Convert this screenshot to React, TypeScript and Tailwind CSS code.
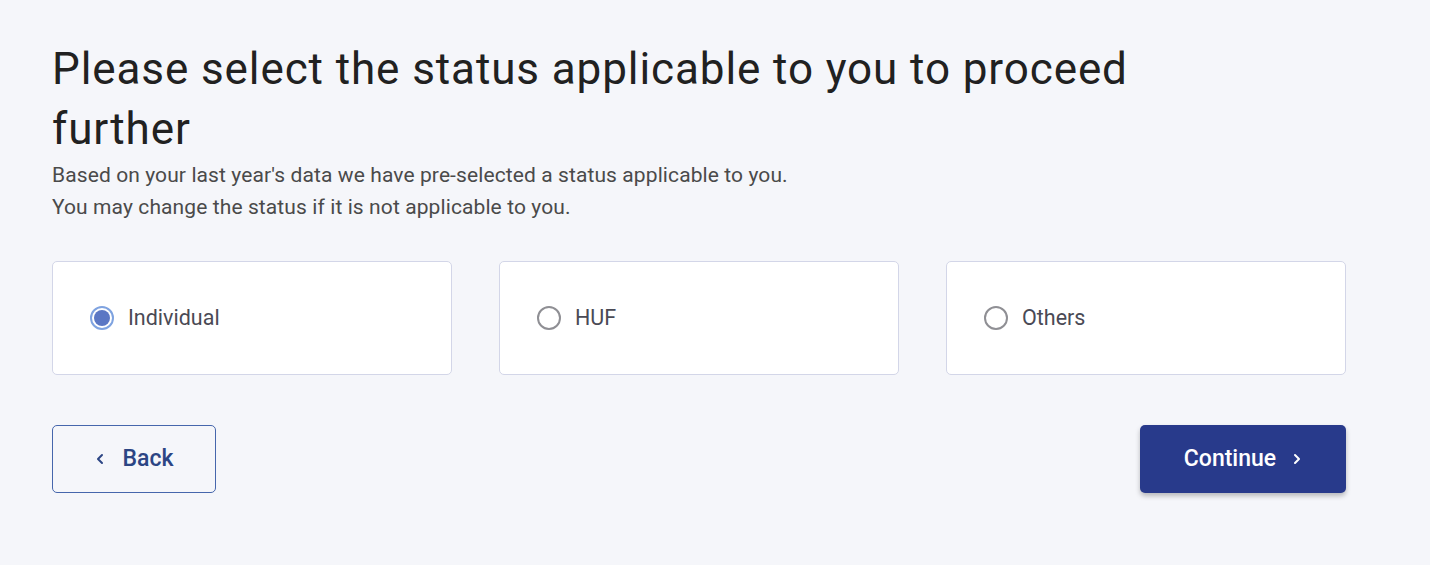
import { useState } from "react";

type Status = "individual" | "huf" | "others";

const options: { id: Status; label: string }[] = [
  { id: "individual", label: "Individual" },
  { id: "huf", label: "HUF" },
  { id: "others", label: "Others" },
];

function Radio({ checked }: { checked: boolean }) {
  return checked ? (
    <span className="flex h-[24px] w-[24px] items-center justify-center rounded-full border-2 border-[#7fa3e0] bg-white">
      <span className="h-[16px] w-[16px] rounded-full bg-[#5b77c4]" />
    </span>
  ) : (
    <span className="h-[24px] w-[24px] rounded-full border-2 border-[#8f8f94] bg-white" />
  );
}

export default function App() {
  const [status, setStatus] = useState<Status>("individual");

  return (
    <div
      className="min-h-[565px] w-full bg-[#f5f6fa] pl-[52px] pr-[84px] pt-[39px] text-[#222]"
      style={{ fontFamily: "Roboto, 'Noto Sans', sans-serif" }}
    >
      <h1 className="max-w-[1160px] text-[44px] font-normal leading-[60px] tracking-[0.9px] text-[#212121]">
        Please select the status applicable to you to proceed further
      </h1>
      <p className="text-[21px] leading-[32px] tracking-[0.1px] text-[#4a4a4a]">
        Based on your last year's data we have pre-selected a status applicable to you.
        <br />
        You may change the status if it is not applicable to you.
      </p>

      <div className="mt-[38px] grid grid-cols-3 gap-[47px]">
        {options.map((o) => (
          <button
            key={o.id}
            onClick={() => setStatus(o.id)}
            className="flex h-[114px] items-center gap-[14px] rounded-[5px] border border-[#d3d6e8] bg-white pl-[37px] text-left"
          >
            <Radio checked={status === o.id} />
            <span className="text-[21.5px] text-[#4a4a55]">{o.label}</span>
          </button>
        ))}
      </div>

      <div className="mt-[50px] flex items-center justify-between">
        <button className="flex h-[68px] w-[164px] items-center justify-center gap-[18px] rounded-[5px] border-[1.5px] border-[#4666ac] bg-transparent text-[23px] font-medium text-[#2c4584]">
          <svg width="10" height="12" viewBox="0 0 10 12" fill="none">
            <path d="M7 2 L3 6 L7 10" stroke="#2c4584" strokeWidth="2" strokeLinecap="round" strokeLinejoin="round" />
          </svg>
          Back
        </button>
        <button className="flex h-[68px] w-[206px] items-center justify-center gap-[16px] rounded-[5px] bg-[#283a8b] text-[23px] font-medium text-white shadow-[0_3px_5px_rgba(0,0,0,0.25)]">
          Continue
          <svg width="10" height="12" viewBox="0 0 10 12" fill="none">
            <path d="M3 2 L7 6 L3 10" stroke="#ffffff" strokeWidth="2" strokeLinecap="round" strokeLinejoin="round" />
          </svg>
        </button>
      </div>
    </div>
  );
}
